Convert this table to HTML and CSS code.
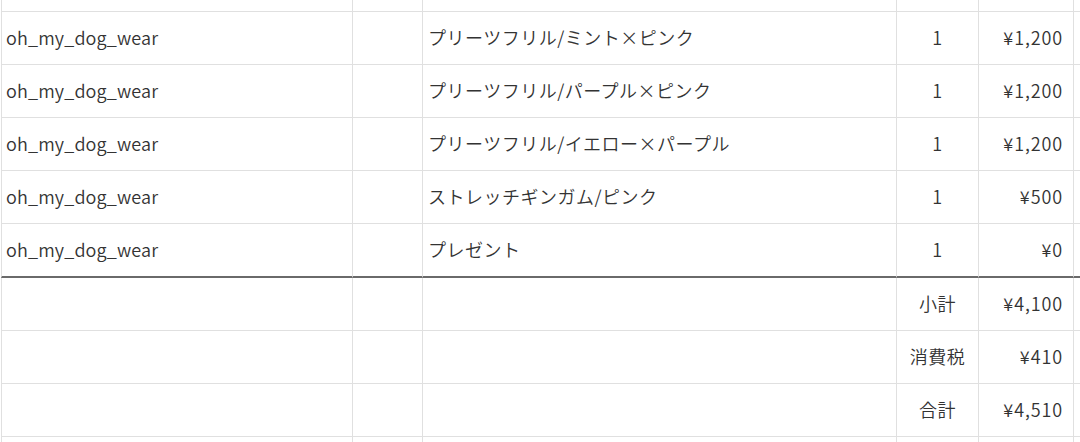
FILE: index.html
```html
<!DOCTYPE html>
<html lang="ja">
<head>
<meta charset="utf-8">
<link rel="stylesheet" href="styles.css">
</head>
<body>
<div class="sheet">
  <div class="row top"><div class="c a"></div><div class="c b"></div><div class="c c3"></div><div class="c d"></div><div class="c e"></div><div class="c f"></div></div>
  <div class="row"><div class="c a">oh_my_dog_wear</div><div class="c b"></div><div class="c c3">プリーツフリル/ミント×ピンク</div><div class="c d">1</div><div class="c e">¥1,200</div><div class="c f"></div></div>
  <div class="row"><div class="c a">oh_my_dog_wear</div><div class="c b"></div><div class="c c3">プリーツフリル/パープル×ピンク</div><div class="c d">1</div><div class="c e">¥1,200</div><div class="c f"></div></div>
  <div class="row"><div class="c a">oh_my_dog_wear</div><div class="c b"></div><div class="c c3">プリーツフリル/イエロー×パープル</div><div class="c d">1</div><div class="c e">¥1,200</div><div class="c f"></div></div>
  <div class="row"><div class="c a">oh_my_dog_wear</div><div class="c b"></div><div class="c c3">ストレッチギンガム/ピンク</div><div class="c d">1</div><div class="c e">¥500</div><div class="c f"></div></div>
  <div class="row last"><div class="c a">oh_my_dog_wear</div><div class="c b"></div><div class="c c3">プレゼント</div><div class="c d">1</div><div class="c e">¥0</div><div class="c f"></div></div>
  <div class="row"><div class="c a"></div><div class="c b"></div><div class="c c3"></div><div class="c d">小計</div><div class="c e">¥4,100</div><div class="c f"></div></div>
  <div class="row"><div class="c a"></div><div class="c b"></div><div class="c c3"></div><div class="c d">消費税</div><div class="c e">¥410</div><div class="c f"></div></div>
  <div class="row"><div class="c a"></div><div class="c b"></div><div class="c c3"></div><div class="c d">合計</div><div class="c e">¥4,510</div><div class="c f"></div></div>
  <div class="row"><div class="c a"></div><div class="c b"></div><div class="c c3"></div><div class="c d"></div><div class="c e"></div><div class="c f"></div></div>
</div>
</body>
</html>
```
FILE: styles.css
```css
html, body {
  margin: 0;
  padding: 0;
  background: #fff;
  overflow: hidden;
}
body {
  font-family: "Noto Sans CJK JP", "Noto Sans", sans-serif;
  font-size: 18px;
  font-weight: 350;
  color: #333333;
  height: 442px;
}
.sheet {
  margin-left: 1px;
  width: 1079px;
}
.row {
  display: grid;
  grid-template-columns: 352px 70px 474px 82px 95px 1fr;
  height: 53px;
}
.row.top {
  height: 12px;
}
.c {
  box-sizing: border-box;
  border-right: 1px solid #e0e0e0;
  border-bottom: 1px solid #e0e0e0;
  display: flex;
  align-items: center;
  white-space: nowrap;
  line-height: 1;
  padding-bottom: 3px;
}
.a {
  border-left: 1px solid #e0e0e0;
  padding-left: 4px;
  letter-spacing: 0.15px;
}
.c3 {
  padding-left: 5px;
  letter-spacing: 0.5px;
}
.d {
  justify-content: center;
  letter-spacing: 0.5px;
}
.e {
  justify-content: flex-end;
  padding-right: 10px;
  letter-spacing: 0.9px;
}
.f {
  border-right: 0;
}
.row.last {
  height: 54px;
}
.row.last .c {
  border-bottom: 2px solid #6a6a6a;
}
```
